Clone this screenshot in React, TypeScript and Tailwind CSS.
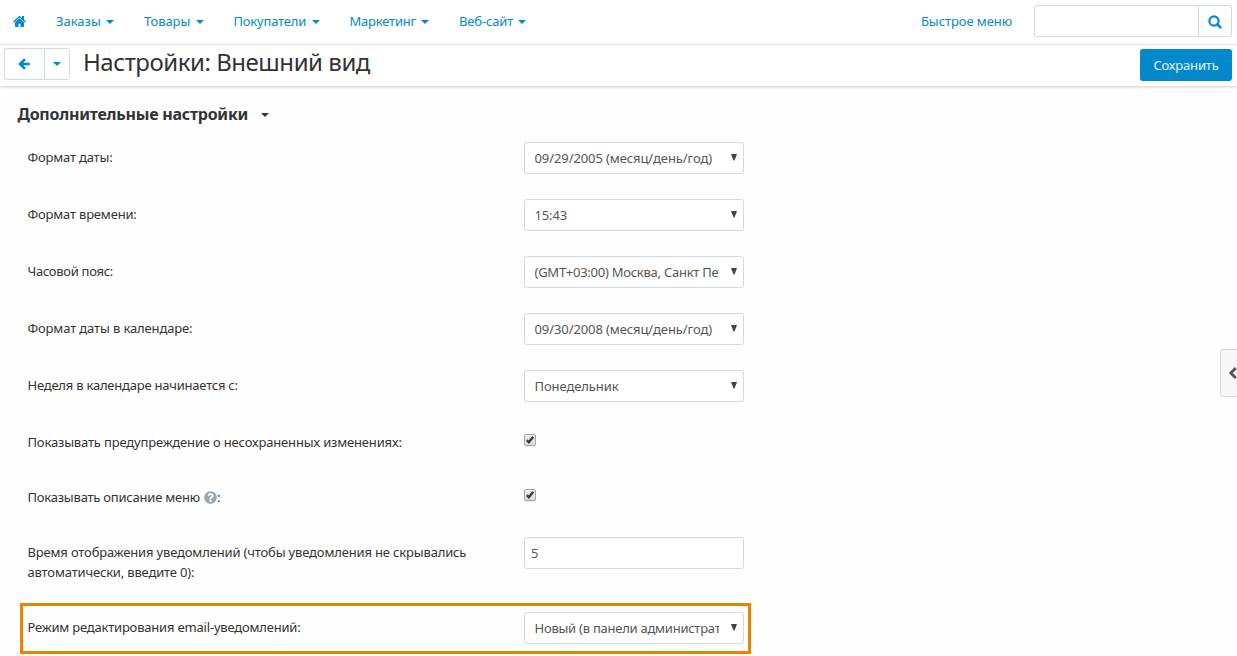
import type { ReactNode } from "react";
import { FaQuestionCircle } from "react-icons/fa";

function Caret() {
  return <span className="block h-0 w-0 shrink-0 border-x-4 border-t-4 border-x-transparent border-t-current" />;
}

function HomeIcon() {
  return (
    <svg viewBox="0 128 1664 1536" preserveAspectRatio="none" className="h-[13px] w-[13px]" fill="currentColor">
      <path d="M1408 992v480q0 26-19 45t-45 19H960v-384H704v384H320q-26 0-45-19t-19-45V992q0-1 .5-3t.5-3l575-474 575 474q1 2 1 6zm223-69l-62 74q-8 9-21 11h-3q-13 0-21-7L832 424 140 1001q-12 8-24 7-13-2-21-11l-62-74q-8-10-7-23.5t11-21.5l719-599q32-26 76-26t76 26l244 204V288q0-14 9-23t23-9h192q14 0 23 9t9 23v408l219 182q10 8 11 21.5t-7 23.5z" />
    </svg>
  );
}

function BackIcon() {
  return (
    <svg viewBox="0 0 12 12" className="mr-px h-3 w-3" fill="none" stroke="currentColor" strokeWidth="2.7">
      <path d="M7 1.1 2.1 6 7 10.9M2.1 6h9.7" />
    </svg>
  );
}

function SearchIcon() {
  return (
    <svg viewBox="0 0 14 14" className="mt-px h-[14px] w-[14px]" fill="none" stroke="currentColor">
      <circle cx="6" cy="6" r="4.6" strokeWidth="2.2" />
      <path d="m9.4 9.4 3 3" strokeWidth="2.6" strokeLinecap="round" />
    </svg>
  );
}

const menu = [
  { label: "Заказы", cls: "w-[45px]" },
  { label: "Товары", cls: "w-[46.5px] tracking-[-0.1px]" },
  { label: "Покупатели", cls: "w-[73px] tracking-[-0.2px]" },
  { label: "Маркетинг", cls: "w-[66.5px] tracking-[-0.2px]" },
  { label: "Веб-сайт", cls: "w-[54px] tracking-[-0.15px]" },
];

function Row({ label, cls, pad, children }: { label: ReactNode; cls: string; pad?: string; children: ReactNode }) {
  return (
    <div className="mb-[25px] flex items-start">
      <div className={`w-[496.5px] shrink-0 whitespace-nowrap py-[5px] leading-5 ${cls}`}>{label}</div>
      <div className={pad}>{children}</div>
    </div>
  );
}

function Select({ value, cls }: { value: string; cls: string }) {
  return (
    <div className="flex h-8 w-[220px] items-center rounded-[3px] border border-[#cfdae3] bg-white pl-[9.5px] text-[#555]">
      <span className={`w-[184px] shrink-0 overflow-hidden whitespace-nowrap ${cls}`}>{value}</span>
      <svg viewBox="0 0 6 7" className="mb-px ml-[12.5px] h-[7px] w-[6px] shrink-0" fill="#444">
        <path d="M0 0h6L3.5 6.5h-1z" />
      </svg>
    </div>
  );
}

function Checkbox() {
  return (
    <div className="flex h-3 w-3 items-center justify-center rounded-[2px] border border-[#a3a3a3] bg-linear-to-b from-[#eee] to-[#dcdcdc] shadow-[0_1px_1px_rgba(0,0,0,0.08)]">
      <svg viewBox="0 0 10 10" className="h-[10px] w-[10px] shrink-0" fill="none" stroke="#3c3c3c" strokeWidth="2.4">
        <path d="M1.8 5.1 3.9 7.2 8.2 1.8" />
      </svg>
    </div>
  );
}

export default function App() {
  return (
    <div className="relative h-[656px] w-[1237px] overflow-hidden bg-[#fefefe] font-['Noto_Sans',sans-serif] text-[13px] leading-5 text-[#333]">
      <nav className="flex h-11 items-center bg-white text-[#0388cc]">
        <div className="ml-[13px] mr-[30px] mt-[-2px]"><HomeIcon /></div>
        <div className="flex gap-[30px]">
          {menu.map((m) => (
            <div key={m.label} className="flex items-center gap-[5px]">
              <span className={`mt-[-2px] whitespace-nowrap ${m.cls}`}>{m.label}</span>
              <Caret />
            </div>
          ))}
        </div>
        <span className="ml-auto mr-[22px] mt-[-2px] tracking-[-0.08px]">Быстрое меню</span>
        <div className="mr-[5px] mt-[-2px] flex h-8 w-[198px] rounded-[3px] border border-[#cfdae3]">
          <div className="grow border-r border-[#cfdae3]" />
          <div className="flex w-8 items-center justify-center"><SearchIcon /></div>
        </div>
      </nav>
      <header className="flex h-[42px] items-start border-t border-[#ebebeb] bg-white bg-linear-to-b from-[#f8f8f8] to-white to-10% shadow-[0_1px_3px_rgba(0,0,0,0.2)]">
        <div className="ml-1 mt-[3px] flex h-8 w-[66px] shrink-0 rounded-[3px] border border-[#cfdae3] bg-white text-[#0388cc]">
          <div className="flex w-10 items-center justify-center border-r border-[#cfdae3]"><BackIcon /></div>
          <div className="flex grow items-center justify-center"><Caret /></div>
        </div>
        <h1 className="ml-[13px] mt-px whitespace-nowrap text-[24px] leading-[32px] tracking-[-0.46px]">Настройки: Внешний вид</h1>
        <button className="ml-auto mr-[5px] mt-1 h-8 w-[92px] rounded-[3px] bg-[#0388cc] tracking-[-0.18px] text-white/90">Сохранить</button>
      </header>
      <h4 className="ml-[17.5px] mt-[18px] flex h-5 items-center gap-3 text-[16px] font-bold">
        <span className="w-[231px] whitespace-nowrap tracking-[-0.24px]">Дополнительные настройки</span>
        <span className="mt-[2px]"><Caret /></span>
      </h4>
      <main className="pl-[27.5px] pt-[18px]">
        <Row label="Формат даты:" cls="tracking-[-0.18px]"><Select value="09/29/2005 (месяц/день/год)" cls="tracking-[-0.09px]" /></Row>
        <Row label="Формат времени:" cls="tracking-[-0.18px]"><Select value="15:43" cls="tracking-[-0.15px]" /></Row>
        <Row label="Часовой пояс:" cls="tracking-[-0.3px]"><Select value="(GMT+03:00) Москва, Санкт Петербург, Волгоград" cls="tracking-[-0.26px]" /></Row>
        <Row label="Формат даты в календаре:" cls="tracking-[-0.13px]"><Select value="09/30/2008 (месяц/день/год)" cls="tracking-[-0.09px]" /></Row>
        <Row label="Неделя в календаре начинается с:" cls="tracking-[-0.22px]"><Select value="Понедельник" cls="tracking-[-0.09px]" /></Row>
        <Row label="Показывать предупреждение о несохраненных изменениях:" cls="tracking-[-0.165px]" pad="pt-[7px]"><Checkbox /></Row>
        <Row
          label={<span className="flex items-center"><span className="w-[173px]">Показывать описание меню</span><span className="ml-[3.5px] text-[#98a9b9]"><FaQuestionCircle size={13} /></span>:</span>}
          cls="tracking-[-0.22px]"
          pad="pt-[7px]"
        ><Checkbox /></Row>
        <Row
          label={<><div className="tracking-[-0.16px]">Время отображения уведомлений (чтобы уведомления не скрывались</div><div className="tracking-[-0.17px]">автоматически, введите 0):</div></>}
          cls=""
        >
          <div className="flex h-8 w-[220px] items-center rounded-[3px] border border-[#cfdae3] bg-white pl-[6px] text-[#555]">5</div>
        </Row>
        <div className="relative">
          <div className="absolute left-[-7.5px] top-[-9px] h-[51px] w-[731px] border-3 border-[#e58500]" />
          <Row label="Режим редактирования email-уведомлений:" cls="tracking-[-0.2px]"><Select value="Новый (в панели администратора)" cls="tracking-[-0.25px]" /></Row>
        </div>
      </main>
      <div className="absolute right-[-3px] top-[349px] flex h-12 w-5 items-center rounded-[3px] border border-[#d5d5d5] bg-[#f7f7f7] pl-[8px]">
        <svg viewBox="0 0 8 12" className="h-3 w-2 shrink-0" fill="none" stroke="#555" strokeWidth="2.8"><path d="M6.8 1 1.8 6l5 5" /></svg>
      </div>
    </div>
  );
}
